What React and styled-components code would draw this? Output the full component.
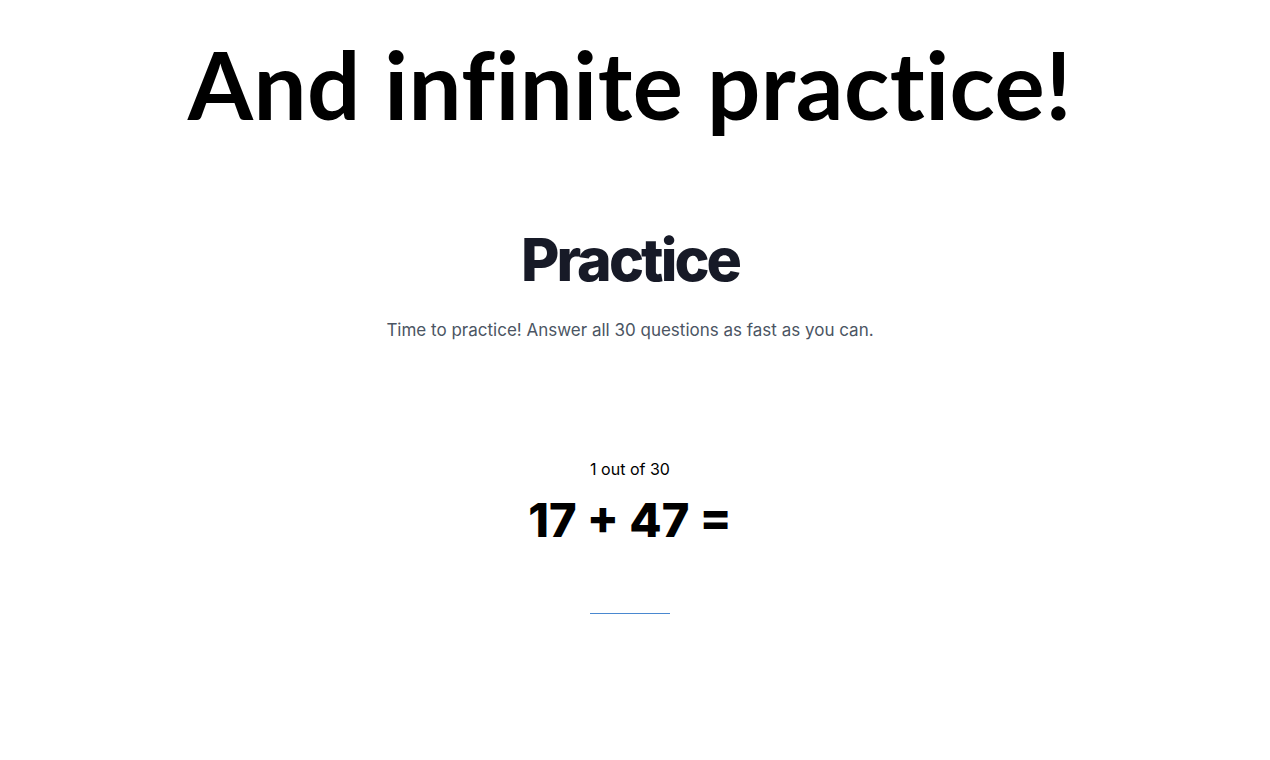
import React from "react";
import styled, { createGlobalStyle } from "styled-components";

const GlobalStyle = createGlobalStyle`
  body {
    margin: 0;
    background: #ffffff;
    font-family: Inter, "Noto Sans", sans-serif;
  }
`;

const Page = styled.div`
  display: flex;
  flex-direction: column;
  align-items: center;
  min-height: 760px;
  padding-right: 10px;
`;

const Banner = styled.h1`
  margin: 22px 0 0;
  font-family: Lato, "Open Sans", sans-serif;
  font-weight: 700;
  font-size: 94px;
  line-height: 124px;
  letter-spacing: 0.5px;
  font-variant-ligatures: no-common-ligatures;
  color: #000;
  text-align: center;
`;

const Header = styled.header`
  display: flex;
  flex-direction: column;
  align-items: center;
  margin-top: 76px;
`;

const Title = styled.h2`
  margin: 0;
  font-family: Inter, sans-serif;
  font-weight: 800;
  font-size: 59px;
  line-height: 76px;
  letter-spacing: -0.05em;
  color: #171a27;
`;

const Lead = styled.p`
  margin: 18px 0 0;
  font-family: Inter, sans-serif;
  font-size: 17px;
  line-height: 28px;
  color: #4b5563;
`;

const Quiz = styled.section`
  display: flex;
  flex-direction: column;
  align-items: center;
  margin-top: 112px;
`;

const Counter = styled.div`
  margin-top: 1px;
  font-family: Inter, sans-serif;
  font-size: 16px;
  line-height: 24px;
  color: #000;
`;

const Question = styled.div`
  margin-top: 7px;
  font-family: Inter, sans-serif;
  font-weight: 800;
  font-size: 47px;
  line-height: 64px;
  color: #000;
`;

const Answer = styled.input`
  margin-top: 37px;
  width: 80px;
  height: 24px;
  padding: 0;
  border: none;
  border-bottom: 1px solid #4a88d0;
  background: transparent;
  outline: none;
  text-align: center;
  font-family: Inter, sans-serif;
  font-size: 18px;
`;

export default function App() {
  return (
    <Page>
      <GlobalStyle />
      <Banner>And infinite practice!</Banner>
      <Header>
        <Title>Practice</Title>
        <Lead>Time to practice! Answer all 30 questions as fast as you can.</Lead>
      </Header>
      <Quiz>
        <Counter>1 out of 30</Counter>
        <Question>17 + 47 =</Question>
        <Answer type="text" aria-label="answer" />
      </Quiz>
    </Page>
  );
}
